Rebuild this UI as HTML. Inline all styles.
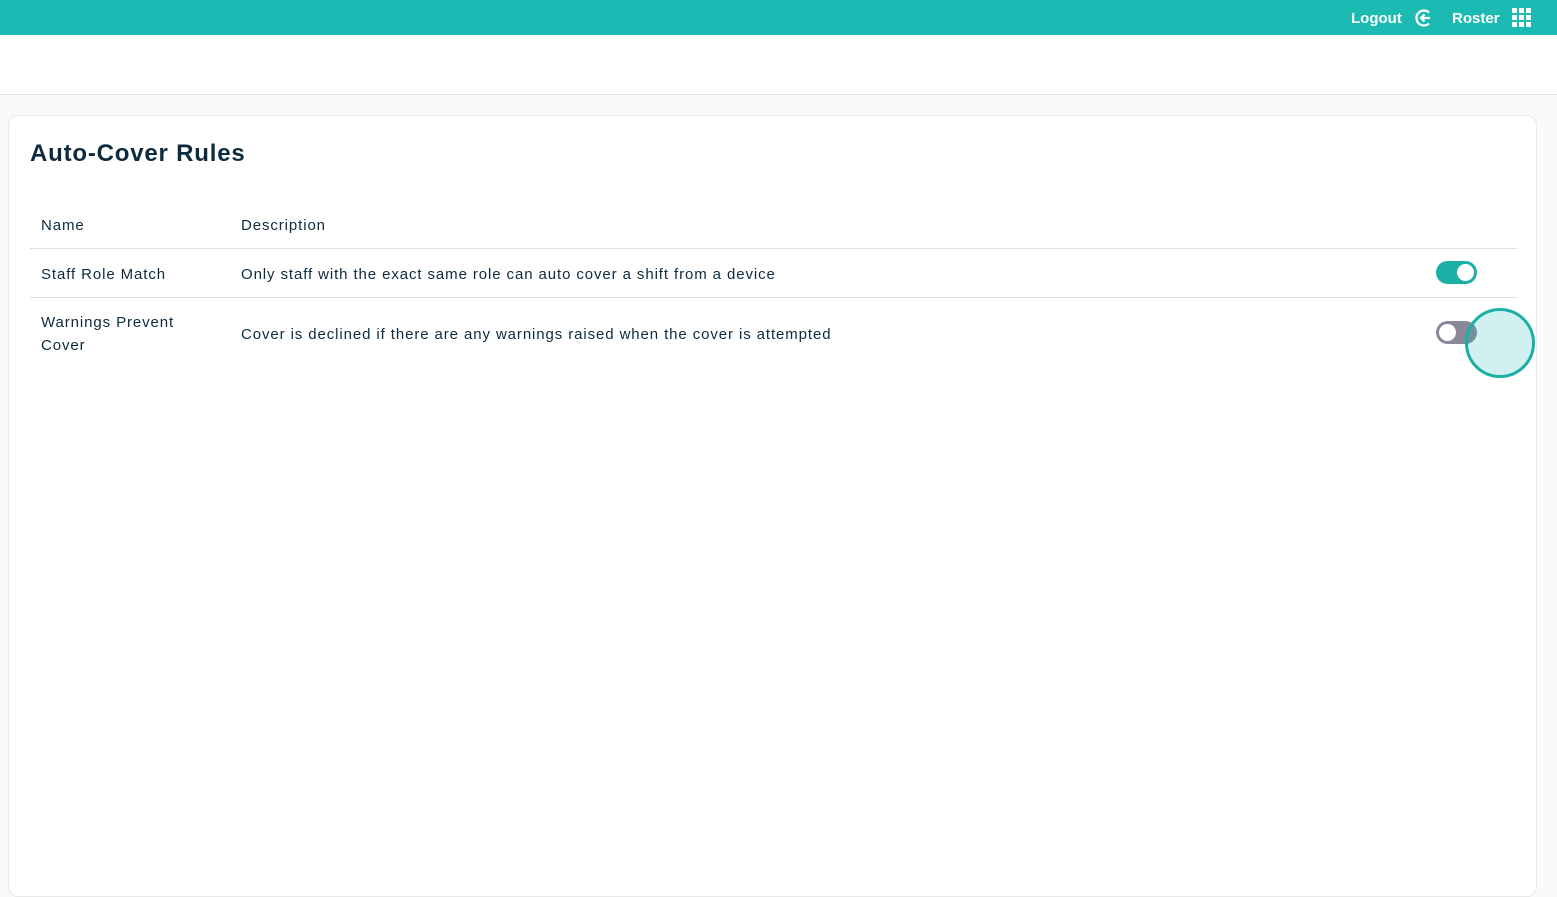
<!DOCTYPE html>
<html><head><style>
body{margin:0;width:1557px;height:876px;overflow:hidden;background:#f9fafa;font-family:"Liberation Sans",sans-serif;color:#0d2b3e;position:relative}
.top{position:absolute;left:0;top:0;width:1557px;height:35px;background:#1bbab3}
.sub{position:absolute;left:0;top:35px;width:1557px;height:59px;background:#fff;border-bottom:1px solid #dcdfe3}
.card{position:absolute;left:8px;top:115px;width:1527px;height:780px;background:#fff;border:1px solid #e6e8ea;border-radius:10px}
.t{position:absolute;font-size:15px;letter-spacing:0.9px}
.tg{position:absolute;width:41px;height:23px;border-radius:12px}
.kn{position:absolute;width:17px;height:17px;border-radius:50%;background:#fff;top:3px}
</style></head><body>
<div class="top">
<span style="position:absolute;left:1351px;top:10px;color:#fff;font-weight:bold;font-size:15px">Logout</span>
<svg style="position:absolute;left:1414px;top:8px" width="20" height="20" viewBox="0 0 20 20"><path d="M15 4.5A7.5 7.5 0 1 0 15 15.5" fill="none" stroke="#fff" stroke-width="2.2"/><path d="M16 10H7M10.5 6.5L7 10l3.5 3.5" fill="none" stroke="#fff" stroke-width="2.2"/></svg>
<span style="position:absolute;left:1452px;top:10px;color:#fff;font-weight:bold;font-size:15px">Roster</span>
<svg style="position:absolute;left:1512px;top:8px" width="20" height="20"><g fill="#fff"><rect x="0" y="0" width="5" height="5"/><rect x="7" y="0" width="5" height="5"/><rect x="14" y="0" width="5" height="5"/><rect x="0" y="7" width="5" height="5"/><rect x="7" y="7" width="5" height="5"/><rect x="14" y="7" width="5" height="5"/><rect x="0" y="14" width="5" height="5"/><rect x="7" y="14" width="5" height="5"/><rect x="14" y="14" width="5" height="5"/></g></svg>
</div>
<div class="sub"></div>
<div class="card">
<div style="position:absolute;left:21px;top:24px;font-size:24px;font-weight:bold;letter-spacing:0.8px">Auto-Cover Rules</div>
<div class="t" style="left:32px;top:101px">Name</div>
<div class="t" style="left:232px;top:101px">Description</div>
<div style="position:absolute;left:21px;top:132px;width:1487px;height:1px;background:#dcdfe3"></div>
<div class="t" style="left:32px;top:150px">Staff Role Match</div>
<div class="t" style="left:232px;top:150px">Only staff with the exact same role can auto cover a shift from a device</div>
<div style="position:absolute;left:21px;top:181px;width:1487px;height:1px;background:#dcdfe3"></div>
<div class="t" style="left:32px;top:195px;line-height:23px">Warnings Prevent<br>Cover</div>
<div class="t" style="left:232px;top:210px">Cover is declined if there are any warnings raised when the cover is attempted</div>
</div>
<div class="tg" style="left:1436px;top:261px;background:#1bb0a5"><div class="kn" style="left:21px"></div></div>
<div class="tg" style="left:1436px;top:321px;background:#8a8799"><div class="kn" style="left:3px"></div></div>
<div style="position:absolute;left:1465px;top:308px;width:64px;height:64px;border-radius:50%;border:3px solid #1bb0a5;background:rgba(27,186,179,0.2)"></div>
</body></html>
